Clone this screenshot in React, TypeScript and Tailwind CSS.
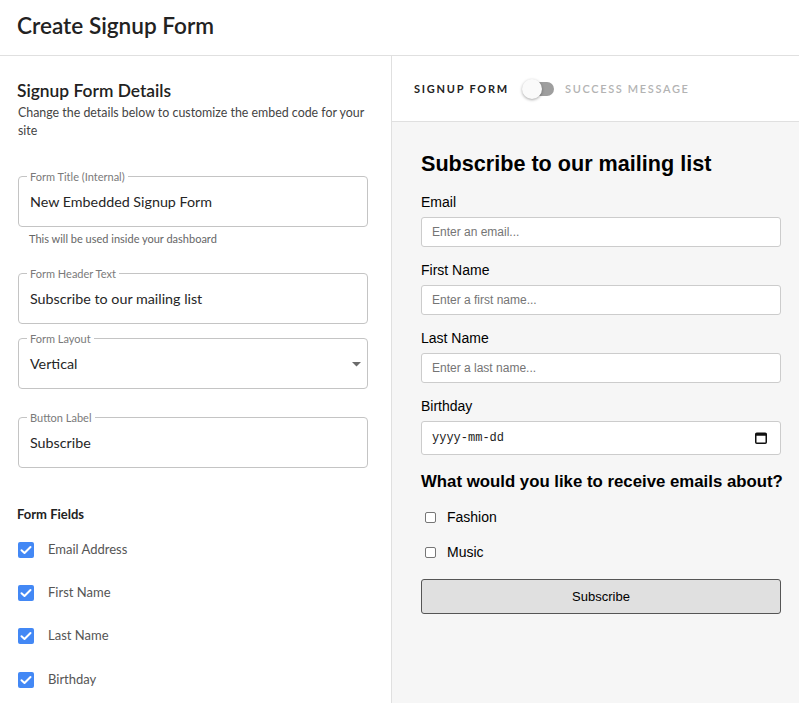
import React from 'react';

const lato = { fontFamily: 'Lato, "Open Sans", sans-serif' };
const arial = { fontFamily: '"Liberation Sans", Arial, sans-serif' };

interface OutlinedProps {
    label: string;
    value: string;
    select?: boolean;
    className?: string;
}

const Outlined: React.FC<OutlinedProps> = ({ label, value, select, className }) => (
    <fieldset className={`border border-[#c4c4c4] rounded-[4px] px-[11px] pt-[10px] pb-[15px] ${className ?? ''}`}>
        <legend className="px-[3px] -ml-[3px] text-[11px] leading-[13px] text-[#7a7a7a]">{label}</legend>
        <div className="flex items-center justify-between">
            <span className="text-[14.3px] leading-[18px] text-[#262626]">{value}</span>
            {select && (
                <svg width="9" height="5" viewBox="0 0 9 5" className="mr-[-5px]">
                    <path d="M0 0 L9 0 L4.5 4.5 Z" fill="#6b6b6b" />
                </svg>
            )}
        </div>
    </fieldset>
);

const CheckRow: React.FC<{ label: string; className?: string }> = ({ label, className }) => (
    <div className={`flex items-center h-[24px] ${className ?? ''}`}>
        <span className="w-[16px] h-[16px] rounded-[2px] bg-[#4388f5] flex items-center justify-center">
            <svg width="12" height="10" viewBox="0 0 12 10">
                <path d="M1.5 5.2 L4.5 8 L10.5 2" stroke="#fff" strokeWidth="2" fill="none" strokeLinecap="round" strokeLinejoin="round" />
            </svg>
        </span>
        <span className="ml-[14px] text-[13px] text-[#555]">{label}</span>
    </div>
);

const Field: React.FC<{ label: string; placeholder: string; className?: string }> = ({ label, placeholder, className }) => (
    <div className={className}>
        <div className="text-[14px] leading-[17px] text-black">{label}</div>
        <div className="mt-[6px] h-[30px] bg-white border border-[#cccccc] rounded-[3px] flex items-center px-[10px] text-[12px] text-[#757575]">
            {placeholder}
        </div>
    </div>
);

const App: React.FC = () => {
    return (
        <div className="w-[799px] h-[703px] overflow-hidden bg-white flex flex-col" style={lato}>
            <header className="h-[56px] border-b border-[#e0e0e0] flex items-center px-[17px] shrink-0">
                <h1 className="text-[22.6px] font-semibold text-[#222] -mt-[4px]">Create Signup Form</h1>
            </header>

            <div className="flex flex-1 min-h-0">
                {/* settings */}
                <div className="w-[392px] border-r border-[#e0e0e0] pl-[18px] pr-[23px] pt-[23px] shrink-0">
                    <h2 className="text-[17.4px] leading-[24px] font-semibold text-[#222] -ml-[1px]">Signup Form Details</h2>
                    <p className="text-[12.4px] leading-[18px] text-[#444] mr-[-10px] mt-[1px]">
                        Change the details below to customize the embed code for your site
                    </p>

                    <Outlined className="mt-[30px]" label="Form Title (Internal)" value="New Embedded Signup Form" />
                    <div className="mt-[5px] ml-[11px] text-[11px] leading-[14px] text-[#666]">This will be used inside your dashboard</div>

                    <Outlined className="mt-[21px]" label="Form Header Text" value="Subscribe to our mailing list" />
                    <Outlined className="mt-[8px]" label="Form Layout" value="Vertical" select />
                    <Outlined className="mt-[22px]" label="Button Label" value="Subscribe" />

                    <h3 className="mt-[37px] text-[13px] leading-[18px] font-bold text-[#222] -ml-[1px]">Form Fields</h3>
                    <CheckRow className="mt-[15px]" label="Email Address" />
                    <CheckRow className="mt-[19px]" label="First Name" />
                    <CheckRow className="mt-[19px]" label="Last Name" />
                    <CheckRow className="mt-[20px]" label="Birthday" />
                </div>

                {/* preview */}
                <div className="flex-1 min-w-0 flex flex-col">
                    <div className="h-[66px] border-b border-[#e0e0e0] flex items-center pl-[22px] pt-[1px] shrink-0">
                        <span className="text-[11px] font-bold tracking-[0.16em] text-[#222]">SIGNUP FORM</span>
                        <span className="relative ml-[13px] w-[32px] h-[20px] flex items-center">
                            <span className="absolute left-[3px] right-0 h-[14px] rounded-full bg-[#9e9e9e]" />
                            <span className="relative w-[20px] h-[20px] rounded-full bg-[#fafafa] shadow-[0_1px_3px_rgba(0,0,0,0.35)]" />
                        </span>
                        <span className="ml-[11px] text-[11px] font-semibold tracking-[0.15em] text-[#b3b3b3]">SUCCESS MESSAGE</span>
                    </div>

                    <div className="flex-1 min-w-0 bg-[#f6f6f6] pl-[29px] pr-[18px] pt-[29px]" style={arial}>
                        <h2 className="text-[21.6px] leading-[26px] font-bold text-black whitespace-nowrap">Subscribe to our mailing list</h2>
                        <Field className="mt-[17px]" label="Email" placeholder="Enter an email..." />
                        <Field className="mt-[15px]" label="First Name" placeholder="Enter a first name..." />
                        <Field className="mt-[15px]" label="Last Name" placeholder="Enter a last name..." />
                        <div className="mt-[15px]">
                            <div className="text-[14px] leading-[17px] text-black">Birthday</div>
                            <div className="mt-[6px] h-[34px] bg-white border border-[#cccccc] rounded-[3px] flex items-center justify-between pl-[10px] pr-[13px]">
                                <span className="text-[12px] text-[#222]" style={{ fontFamily: '"Liberation Mono", "Courier New", monospace' }}>yyyy-mm-dd</span>
                                <svg width="12" height="12" viewBox="0 0 12 12">
                                    <rect x="0.75" y="1.25" width="10.5" height="10" rx="1" fill="none" stroke="#111" strokeWidth="1.5" />
                                    <rect x="0.75" y="1.25" width="10.5" height="2.5" fill="#111" />
                                </svg>
                            </div>
                        </div>
                        <h3 className="mt-[17px] text-[16.8px] leading-[20px] font-bold text-black whitespace-nowrap">What would you like to receive emails about?</h3>
                        <label className="mt-[15px] flex items-center h-[20px]">
                            <span className="ml-[4px] w-[11px] h-[11px] border border-[#767676] rounded-[2px] bg-white" />
                            <span className="ml-[11px] text-[14px] text-black">Fashion</span>
                        </label>
                        <label className="mt-[15px] flex items-center h-[20px]">
                            <span className="ml-[4px] w-[11px] h-[11px] border border-[#767676] rounded-[2px] bg-white" />
                            <span className="ml-[11px] text-[14px] text-black">Music</span>
                        </label>
                        <div className="mt-[17px] h-[35px] border border-[#555] rounded-[3px] bg-[#e0e0e0] flex items-center justify-center text-[13px] text-black">
                            Subscribe
                        </div>
                    </div>
                </div>
            </div>
        </div>
    );
};

export default App;
